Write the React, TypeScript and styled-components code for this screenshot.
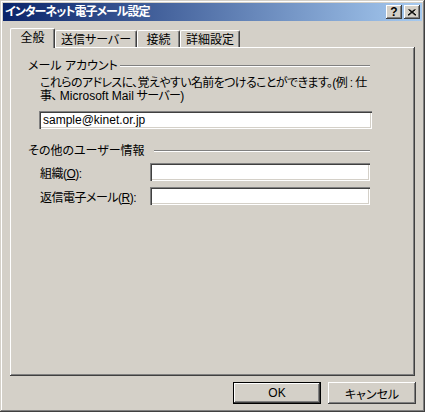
import React from 'react';
import styled, { createGlobalStyle, css } from 'styled-components';

const GlobalStyle = createGlobalStyle`
  html, body {
    margin: 0;
    padding: 0;
    background: #d4d0c8;
  }
  body {
    font-family: "Liberation Sans", "Noto Sans CJK JP", sans-serif;
    font-size: 12px;
    color: #000;
    font-feature-settings: "palt";
  }
`;

const raised = css`
  box-shadow: inset -1px -1px #404040, inset 1px 1px #ffffff, inset -2px -2px #808080;
`;

const Window = styled.div`
  box-sizing: border-box;
  width: 425px;
  height: 412px;
  padding: 3px;
  display: flex;
  flex-direction: column;
  background: #d4d0c8;
  box-shadow: inset -1px -1px #404040, inset 1px 1px #d4d0c8, inset -2px -2px #808080,
    inset 2px 2px #ffffff;
`;

const TitleBar = styled.div`
  height: 18px;
  display: flex;
  align-items: center;
  gap: 2px;
  padding: 0 2px 0 2px;
  background: linear-gradient(to right, #0a246a, #a6caf0);
`;

const Title = styled.span`
  flex: 1;
  color: #fff;
  font-weight: bold;
  font-size: 12px;
  letter-spacing: -1px;
  line-height: 18px;
  white-space: nowrap;
`;

const CaptionButton = styled.div`
  width: 16px;
  height: 14px;
  display: flex;
  align-items: center;
  justify-content: center;
  background: #d4d0c8;
  font-weight: bold;
  font-size: 12px;
  line-height: 14px;
  ${raised}
`;

const Body = styled.div`
  flex: 1;
  display: flex;
  flex-direction: column;
  padding: 7px 7px 0 7px;
`;

const TabRow = styled.div`
  height: 19px;
  display: flex;
  align-items: flex-end;
`;

const Tab = styled.div<{ $w: number; $active?: boolean }>`
  box-sizing: border-box;
  width: ${({ $w }) => $w}px;
  height: ${({ $active }) => ($active ? 20 : 17)}px;
  margin-bottom: ${({ $active }) => ($active ? -1 : 0)}px;
  padding-top: ${({ $active }) => ($active ? 3 : 2)}px;
  display: flex;
  justify-content: center;
  align-items: ${({ $active }) => ($active ? 'flex-start' : 'center')};
  line-height: 13px;
  background: #d4d0c8;
  border-top: 1px solid #fff;
  border-left: 1px solid #fff;
  border-right: 1px solid #404040;
  border-radius: 2px 2px 0 0;
  box-shadow: inset -1px 0 #808080;
  position: relative;
  z-index: ${({ $active }) => ($active ? 1 : 0)};
  white-space: nowrap;
`;

const Panel = styled.div`
  box-sizing: border-box;
  height: 329px;
  padding: 12px 0 0 0;
  display: flex;
  flex-direction: column;
  ${raised}
`;

const GroupHeader = styled.div<{ $mt?: number }>`
  height: 14px;
  display: flex;
  align-items: center;
  margin-top: ${({ $mt }) => $mt ?? 0}px;
  padding: 0 45px 0 18px;
`;

const GroupLabel = styled.span<{ $w: number }>`
  width: ${({ $w }) => $w}px;
  flex: none;
  white-space: nowrap;
  line-height: 14px;
`;

const Etched = styled.div`
  flex: 1;
  height: 0;
  border-top: 1px solid #808080;
  border-bottom: 1px solid #fff;
`;

const Description = styled.p`
  margin: 4px 0 0 30px;
  line-height: 13px;
  letter-spacing: -0.6px;
  white-space: nowrap;
`;

const Latin = styled.span`
  letter-spacing: 0;
  margin-left: 3px;
`;

const TextField = styled.input<{ $w: number }>`
  box-sizing: border-box;
  width: ${({ $w }) => $w}px;
  height: 18px;
  margin: 0;
  padding: 0 4px;
  border: none;
  outline: none;
  background: #fff;
  font: 12px "Liberation Sans", "Noto Sans CJK JP", sans-serif;
  color: #000;
  box-shadow: inset 1px 1px #808080, inset 2px 2px #404040, inset -1px -1px #ffffff,
    inset -2px -2px #d4d0c8;
`;

const FieldRow = styled.div<{ $mt: number; $indent: number }>`
  display: flex;
  align-items: center;
  margin-top: ${({ $mt }) => $mt}px;
  padding-left: ${({ $indent }) => $indent}px;
`;

const FieldLabel = styled.label`
  width: 110px;
  flex: none;
  white-space: nowrap;
  letter-spacing: -0.5px;
`;

const Footer = styled.div`
  display: flex;
  justify-content: flex-end;
  gap: 7px;
  margin: 6px -1px 0 0;
`;

const PushButton = styled.div<{ $default?: boolean }>`
  box-sizing: border-box;
  width: 88px;
  height: 22px;
  display: flex;
  align-items: center;
  justify-content: center;
  background: #d4d0c8;
  ${({ $default }) =>
    $default
      ? css`
          box-shadow: inset 0 0 0 1px #000, inset -2px -2px #404040, inset 2px 2px #fff,
            inset -3px -3px #808080;
        `
      : raised}
`;

const CloseGlyph = () => (
  <svg width="8" height="7" viewBox="0 0 8 7">
    <path d="M0.5 0.5 L7.5 6.5 M1.5 0.5 L8 6 M7.5 0.5 L0.5 6.5 M6.5 0.5 L0 6" stroke="#000" strokeWidth="1" fill="none" />
  </svg>
);

export default function App() {
  return (
    <>
      <GlobalStyle />
      <Window>
        <TitleBar>
          <Title>インターネット電子メール設定</Title>
          <CaptionButton>?</CaptionButton>
          <CaptionButton>
            <CloseGlyph />
          </CaptionButton>
        </TitleBar>
        <Body>
          <TabRow>
            <Tab $w={45} $active>全般</Tab>
            <Tab $w={82}>送信サーバー</Tab>
            <Tab $w={43}>接続</Tab>
            <Tab $w={60}>詳細設定</Tab>
          </TabRow>
          <Panel>
            <GroupHeader>
              <GroupLabel $w={92}>メール アカウント</GroupLabel>
              <Etched />
            </GroupHeader>
            <Description>
              これらのアドレスに、覚えやすい名前をつけることができます。(例 : 仕
              <br />
              事、<Latin>Microsoft Mail</Latin> サーバー)
            </Description>
            <FieldRow $mt={8} $indent={29}>
              <TextField $w={333} defaultValue="sample@kinet.or.jp" readOnly />
            </FieldRow>
            <GroupHeader $mt={15}>
              <GroupLabel $w={126}>その他のユーザー情報</GroupLabel>
              <Etched />
            </GroupHeader>
            <FieldRow $mt={5} $indent={30}>
              <FieldLabel>
                組織(<u>O</u>):
              </FieldLabel>
              <TextField $w={220} readOnly />
            </FieldRow>
            <FieldRow $mt={6} $indent={30}>
              <FieldLabel>
                返信電子メール(<u>R</u>):
              </FieldLabel>
              <TextField $w={220} readOnly />
            </FieldRow>
          </Panel>
          <Footer>
            <PushButton $default>OK</PushButton>
            <PushButton>キャンセル</PushButton>
          </Footer>
        </Body>
      </Window>
    </>
  );
}
